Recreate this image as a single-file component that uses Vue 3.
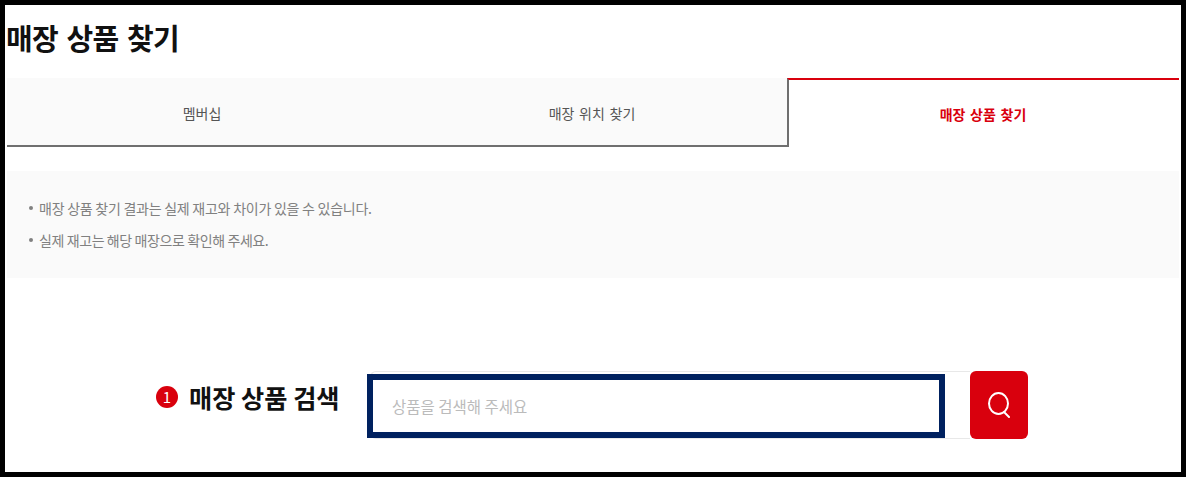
<template>
  <div class="frame">
    <h1 class="title">매장 상품 찾기</h1>
    <div class="tabs">
      <div
        v-for="(tab, index) in tabs"
        :key="tab"
        class="tab"
        :class="{ active: index === activeTab }"
      >
        {{ tab }}
      </div>
    </div>
    <ul class="notes">
      <li v-for="note in notes" :key="note">{{ note }}</li>
    </ul>
    <div class="search-row">
      <div class="search-label">
        <span class="step">1</span>
        <span>매장 상품 검색</span>
      </div>
      <div class="search-box">
        <div class="search-input">상품을 검색해 주세요</div>
      </div>
      <button class="search-btn" aria-label="검색">
        <svg width="22" height="26" viewBox="0 0 22 26" fill="none" stroke="#fff" stroke-width="2">
          <ellipse cx="10.5" cy="11.5" rx="9.5" ry="10.5" />
          <path d="M16 20 L21 25" stroke-linecap="round" />
        </svg>
      </button>
    </div>
  </div>
</template>

<script setup>
const tabs = ['멤버십', '매장 위치 찾기', '매장 상품 찾기']
const activeTab = 2
const notes = [
  '매장 상품 찾기 결과는 실제 재고와 차이가 있을 수 있습니다.',
  '실제 재고는 해당 매장으로 확인해 주세요.'
]
</script>

<style>
html,
body {
  margin: 0;
  background: #fff;
}
</style>

<style scoped>
.frame {
  box-sizing: border-box;
  width: 1186px;
  height: 477px;
  border: 5px solid #000;
  padding: 0 2px 0 2px;
  overflow: hidden;
  font-family: "Noto Sans CJK KR", "Noto Sans", sans-serif;
  color: #111;
}

.title {
  margin: 0 0 0 -1px;
  padding-top: 12px;
  height: 73px;
  box-sizing: border-box;
  font-size: 29px;
  line-height: 40px;
  font-weight: 700;
  letter-spacing: -0.8px;
  word-spacing: 3px;
  color: #111;
}

.tabs {
  display: grid;
  grid-template-columns: 390px 390px 1fr;
  height: 69px;
}

.tab {
  display: flex;
  align-items: center;
  justify-content: center;
  box-sizing: border-box;
  padding-top: 2px;
  background: #fafafa;
  border-bottom: 2px solid #6f6f6f;
  font-size: 14px;
  word-spacing: 1.5px;
  color: #555;
}

.tab.active {
  background: #fff;
  border-top: 2px solid #d9000d;
  border-left: 2px solid #6f6f6f;
  border-bottom: none;
  padding-right: 2px;
  padding-top: 1px;
  color: #d9000d;
  font-weight: 700;
}

.notes {
  margin: 24px 0 0;
  height: 107px;
  box-sizing: border-box;
  padding: 21px 0 0 32px;
  background: #fafafa;
  list-style: none;
  font-size: 14px;
  line-height: 32px;
  letter-spacing: -0.25px;
  color: #808080;
}

.notes li {
  position: relative;
}

.notes li:last-child {
  letter-spacing: -0.4px;
}

.notes li::before {
  content: "";
  position: absolute;
  left: -10px;
  top: 14px;
  width: 4px;
  height: 4px;
  border-radius: 50%;
  background: #808080;
}

.search-row {
  display: flex;
  align-items: center;
  margin-top: 93px;
  margin-left: 149px;
}

.search-label {
  display: flex;
  align-items: center;
  gap: 11px;
  width: 214px;
  margin-top: -16px;
  font-size: 25.2px;
  font-weight: 700;
  color: #111;
}

.step {
  width: 22px;
  height: 22px;
  border-radius: 50%;
  background: #d9000d;
  color: #fff;
  font-size: 15px;
  font-weight: 400;
  line-height: 22px;
  text-align: center;
}

.search-box {
  box-sizing: border-box;
  display: flex;
  align-items: center;
  width: 600px;
  height: 68px;
  border: 1px solid #e8e8e8;
  border-right: none;
  border-radius: 6px 0 0 6px;
}

.search-input {
  box-sizing: border-box;
  flex: none;
  width: 578px;
  height: 64px;
  margin-top: 2px;
  margin-left: -4px;
  border: 6px solid #00215f;
  padding-left: 19px;
  font-size: 15.5px;
  line-height: 52px;
  color: #bbb;
}

.search-btn {
  display: flex;
  align-items: center;
  justify-content: center;
  width: 58px;
  height: 68px;
  border: none;
  border-radius: 6px;
  padding: 0;
  background: #d9000d;
}
</style>
